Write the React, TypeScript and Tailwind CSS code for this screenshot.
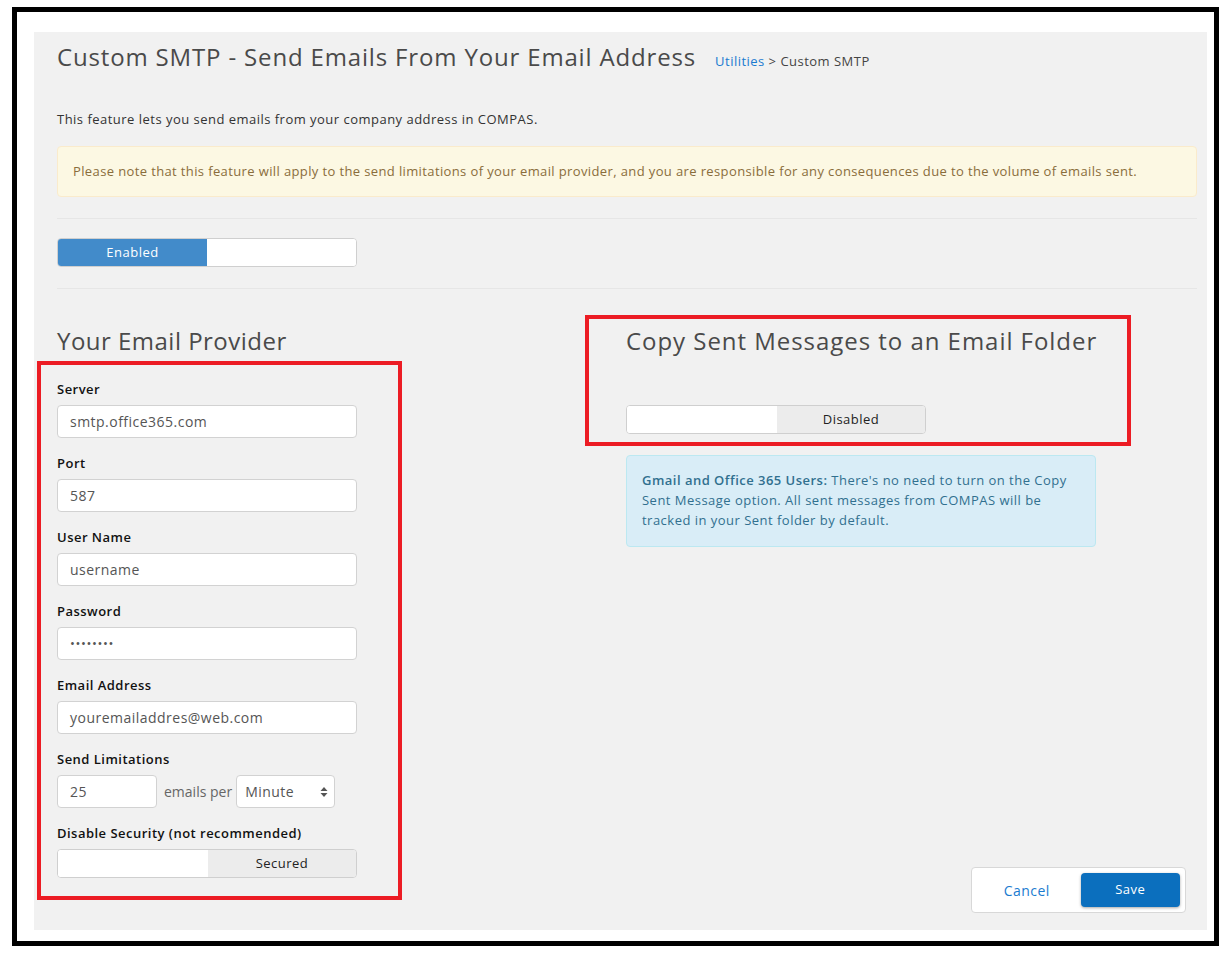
import React from "react";

const font = { fontFamily: '"Open Sans", "Noto Sans", sans-serif' };

function Toggle({
  on,
  onLabel,
  offLabel,
}: {
  on: boolean;
  onLabel?: string;
  offLabel?: string;
}) {
  return (
    <div className="flex h-[29px] w-[300px] overflow-hidden rounded-[4px] border border-[#cfcfcf] bg-white text-[13px]">
      {on ? (
        <>
          <div className="flex w-[149px] items-center justify-center bg-[#428bca] text-white">
            {onLabel}
          </div>
          <div className="flex-1 bg-white" />
        </>
      ) : (
        <>
          <div className="w-[150px] bg-white" />
          <div className="flex flex-1 items-center justify-center bg-[#ececec] text-[#222]">
            {offLabel}
          </div>
        </>
      )}
    </div>
  );
}

function Field({ label, value, secret }: { label: string; value: string; secret?: boolean }) {
  return (
    <div className="mb-[16px]">
      <div className="h-[18px] text-[13px] font-semibold leading-[18px] text-[#111]">{label}</div>
      <div className="mt-[7px] flex h-[33px] w-[300px] items-center rounded-[4px] border border-[#d2d2d2] bg-white px-[12px] text-[14px] text-[#555]">
        {secret ? (
          <span className="text-[13px] tracking-[0.6px] text-[#555]">{value}</span>
        ) : (
          value
        )}
      </div>
    </div>
  );
}

export default function App() {
  return (
    <div className="h-[955px] w-[1229px] bg-white pl-[12px] pt-[7px] tracking-[0.03em]" style={font}>
      <div className="h-[939px] w-[1207px] border-[5px] border-black bg-white pb-[11px] pl-[17px] pr-[7px] pt-[20px]">
        <div className="flex h-[898px] w-[1173px] flex-col bg-[#f1f1f1] pl-[23px] pr-[10px] pt-[10px]">
          {/* page header */}
          <div className="flex items-baseline">
            <h1 className="text-[24px] leading-[30px] font-normal tracking-[0.035em] text-[#4a4a4a]">
              Custom SMTP - Send Emails From Your Email Address
            </h1>
            <div className="ml-[19px] text-[13px] text-[#444]">
              <span className="text-[#1a7bd0]">Utilities</span> &gt; Custom SMTP
            </div>
          </div>

          <p className="mt-[37px] text-[13px] leading-[20px] text-[#333]">
            This feature lets you send emails from your company address in COMPAS.
          </p>

          <div className="mt-[17px] flex h-[51px] items-center rounded-[4px] border border-[#faebcc] bg-[#fcf8e3] px-[15px] text-[13px] tracking-[0.029em] text-[#8a6d3b]">
            Please note that this feature will apply to the send limitations of your email provider, and you are
            responsible for any consequences due to the volume of emails sent.
          </div>

          <div className="mt-[21px] border-t border-[#e6e6e6]" />
          <div className="mt-[19px]">
            <Toggle on onLabel="Enabled" />
          </div>
          <div className="mt-[21px] border-t border-[#e6e6e6]" />

          {/* settings columns */}
          <div className="flex flex-1">
            <div className="relative w-[569px] pt-[37px]">
              <h2 className="text-[24px] leading-[30px] font-normal text-[#4a4a4a]">Your Email Provider</h2>
              <div className="relative mt-[24px]">
                <Field label="Server" value="smtp.office365.com" />
                <Field label="Port" value="587" />
                <Field label="User Name" value="username" />
                <Field label="Password" value="••••••••" secret />
                <Field label="Email Address" value="youremailaddres@web.com" />

                <div className="mb-[16px]">
                  <div className="h-[18px] text-[13px] font-semibold leading-[18px] text-[#111]">
                    Send Limitations
                  </div>
                  <div className="mt-[7px] flex h-[33px] items-center">
                    <div className="flex h-[33px] w-[100px] items-center rounded-[4px] border border-[#d2d2d2] bg-white px-[12px] text-[14px] text-[#555]">
                      25
                    </div>
                    <span className="ml-[7px] text-[14px] tracking-normal text-[#666]">emails per</span>
                    <div className="ml-[4px] flex h-[33px] w-[99px] items-center justify-between rounded-[4px] border border-[#d2d2d2] bg-white pl-[8px] pr-[6px] text-[14px] text-[#555]">
                      Minute
                      <svg width="8" height="12" viewBox="0 0 8 12">
                        <path d="M4 1 L7.5 5 L0.5 5 Z" fill="#555" />
                        <path d="M4 11 L7.5 7 L0.5 7 Z" fill="#555" />
                      </svg>
                    </div>
                  </div>
                </div>

                <div>
                  <div className="h-[18px] text-[13px] font-semibold leading-[18px] text-[#111]">
                    Disable Security (not recommended)
                  </div>
                  <div className="mt-[7px]">
                    <Toggle on={false} offLabel="Secured" />
                  </div>
                </div>

                <div className="pointer-events-none absolute left-[-20px] top-[-19px] h-[539px] w-[365px] border-[4px] border-[#ec1c24]" />
              </div>
            </div>

            <div className="relative flex flex-1 flex-col pt-[37px]">
              <div className="relative">
                <h2 className="text-[24px] leading-[30px] font-normal tracking-[0.04em] text-[#4a4a4a]">
                  Copy Sent Messages to an Email Folder
                </h2>
                <div className="mt-[49px]">
                  <Toggle on={false} offLabel="Disabled" />
                </div>
                <div className="pointer-events-none absolute left-[-41px] top-[-11px] h-[131px] w-[546px] border-[4px] border-[#ec1c24]" />
              </div>

              <div className="mt-[21px] w-[470px] rounded-[4px] border border-[#bce8f1] bg-[#d9edf7] pb-[16px] pl-[15px] pr-[20px] pt-[14px] text-[13px] leading-[20px] text-[#31708f]">
                <strong className="font-semibold">Gmail and Office 365 Users:</strong> There's no need to turn on the
                Copy Sent Message option. All sent messages from COMPAS will be tracked in your Sent folder by default.
              </div>

              <div className="mb-[17px] mr-[11px] mt-auto flex h-[46px] w-[215px] items-center self-end rounded-[4px] border border-[#d8d8d8] bg-white pl-[6px] pr-[5px]">
                <button className="flex h-[34px] w-[98px] items-center justify-center text-[14px] text-[#1a7bd0]">
                  Cancel
                </button>
                <button className="ml-[5px] flex h-[34px] w-[100px] items-center justify-center rounded-[4px] bg-[#0b6fbe] text-[13px] text-white shadow-[0_1px_3px_rgba(0,0,0,0.35)]">
                  Save
                </button>
              </div>
            </div>
          </div>
        </div>
      </div>
    </div>
  );
}
